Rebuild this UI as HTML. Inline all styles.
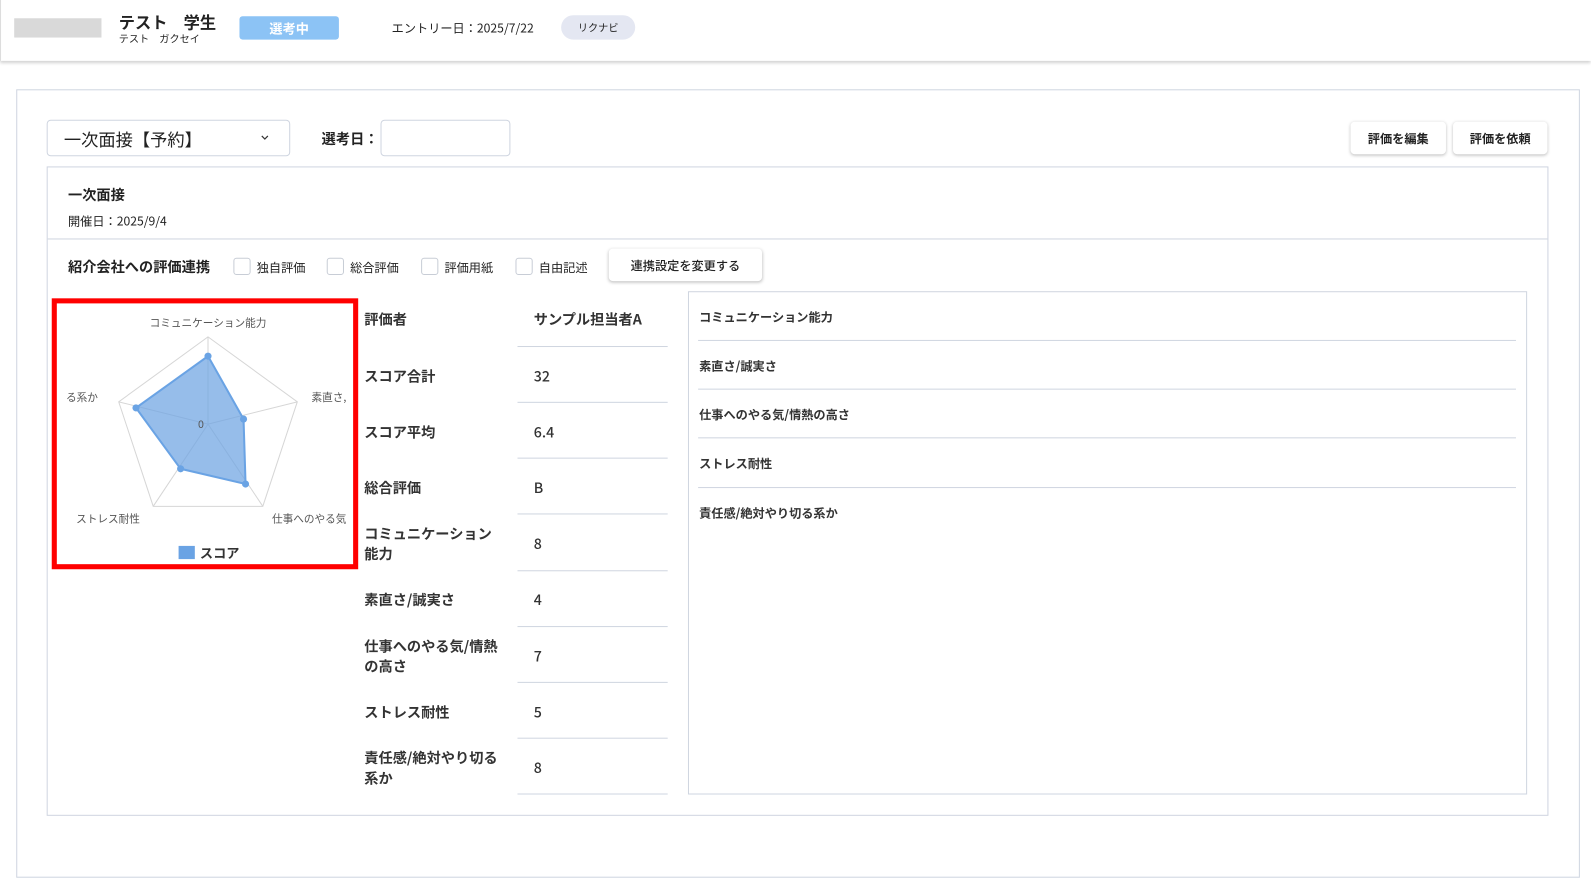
<!DOCTYPE html>
<html><head><meta charset="utf-8"><style>
*{box-sizing:border-box;margin:0;padding:0}
html,body{width:1591px;height:890px;overflow:hidden;background:#fff}
body{font-family:"Noto Sans CJK JP","Liberation Sans",sans-serif;color:#222}
#w{position:absolute;left:0;top:0;width:1568px;height:877px;transform:scale(1.0147);transform-origin:0 0}
.a{position:absolute;white-space:nowrap}
.hdr{position:absolute;left:0;top:0;width:1568px;height:60px;background:#fff;box-shadow:0 2px 3px rgba(0,0,0,.18);border-left:1px solid #ddd}
.btn{position:absolute;background:#fff;border-radius:4px;box-shadow:0 1px 3px rgba(0,0,0,.25);font-size:12px;font-weight:bold;display:flex;align-items:center;justify-content:center}
.cb{position:absolute;width:17px;height:17px;border:1px solid #c8cdd6;border-radius:3px;background:#fff}
.lbl{font-size:14px;font-weight:bold;color:#333;line-height:20px}
.val{font-size:14px;font-weight:bold;color:#333}
.ln{position:absolute;height:1px;background:#cfd5e0}
.it{font-size:12px;font-weight:bold;color:#333}
</style></head><body><div id="w">
<div class="hdr"></div>
<div class="a" style="left:14px;top:18px;width:86px;height:19px;background:#d9d9d9"></div>
<div class="a" style="left:117px;top:10px;font-size:16px;font-weight:bold;line-height:22px">テスト　学生</div>
<div class="a" style="left:117px;top:31px;font-size:10px;line-height:14px">テスト　ガクセイ</div>
<div class="a" style="left:236px;top:16px;width:98px;height:23px;background:#8cc3f5;border-radius:3px;color:#fff;font-size:13px;font-weight:bold;text-align:center;line-height:23px">選考中</div>
<div class="a" style="left:386px;top:19px;font-size:12px;line-height:18px">エントリー日：2025/7/22</div>
<div class="a" style="left:553px;top:15px;width:73px;height:24px;background:#e4e7f2;border-radius:12px;font-size:10px;text-align:center;line-height:24px">リクナビ</div>

<div class="a" style="left:16px;top:88px;width:1541px;height:777px;border:1px solid #cfd5e0"></div>
<div class="a" style="left:46px;top:118px;width:240px;height:36px;border:1px solid #cfd5e0;border-radius:4px;font-size:17px;line-height:36px;padding-left:16px">一次面接【予約】</div>
<svg class="a" style="left:256px;top:132px" width="10" height="8"><path d="M2 2 L5 5 L8 2" fill="none" stroke="#333" stroke-width="1.2"/></svg>
<div class="a" style="left:317px;top:127px;font-size:14px;font-weight:bold;line-height:20px">選考日：</div>
<div class="a" style="left:375px;top:118px;width:128px;height:36px;border:1px solid #cfd5e0;border-radius:4px"></div>
<div class="btn" style="left:1331px;top:120px;width:94px;height:32px">評価を編集</div>
<div class="btn" style="left:1432px;top:120px;width:93px;height:32px">評価を依頼</div>

<div class="a" style="left:46px;top:164px;width:1480px;height:640px;border:1px solid #cfd5e0"></div>
<div class="a" style="left:67px;top:182px;font-size:14px;font-weight:bold;line-height:20px">一次面接</div>
<div class="a" style="left:67px;top:209px;font-size:12px;line-height:17px">開催日：2025/9/4</div>
<div class="ln" style="left:47px;top:235px;width:1478px"></div>
<div class="a" style="left:67px;top:253px;font-size:14px;font-weight:bold;line-height:20px">紹介会社への評価連携</div>
<div class="cb" style="left:230px;top:254px"></div><div class="a" style="left:253px;top:255px;font-size:12px;line-height:17px">独自評価</div>
<div class="cb" style="left:322px;top:254px"></div><div class="a" style="left:345px;top:255px;font-size:12px;line-height:17px">総合評価</div>
<div class="cb" style="left:415px;top:254px"></div><div class="a" style="left:438px;top:255px;font-size:12px;line-height:17px">評価用紙</div>
<div class="cb" style="left:508px;top:254px"></div><div class="a" style="left:531px;top:255px;font-size:12px;line-height:17px">自由記述</div>
<div class="btn" style="left:600px;top:245px;width:151px;height:32px;font-weight:500">連携設定を変更する</div>

<div class="a" style="left:51px;top:294px;width:302px;height:267px;border:5px solid #f00"></div>
<svg class="a" style="left:0;top:0" width="400" height="600" font-family="Noto Sans CJK JP,Liberation Sans,sans-serif">
<g fill="none" stroke="#d6d6d6" stroke-width="1">
<polygon points="205,332 293,396 259,499 151,499 117,396"/>
<line x1="205" y1="418" x2="205" y2="332"/><line x1="205" y1="418" x2="293" y2="396"/><line x1="205" y1="418" x2="259" y2="499"/><line x1="205" y1="418" x2="151" y2="499"/><line x1="205" y1="418" x2="117" y2="396"/>
</g>
<polygon points="205,351 240,413 242,477 178,462 134,402" fill="rgba(110,164,226,.72)" stroke="#6aa3e4" stroke-width="2"/>
<g fill="#6aa3e4"><circle cx="205" cy="351" r="3.5"/><circle cx="240" cy="413" r="3.5"/><circle cx="242" cy="477" r="3.5"/><circle cx="178" cy="462" r="3.5"/><circle cx="134" cy="402" r="3.5"/></g>
<g font-size="10.5" fill="#555">
<text x="205" y="322" text-anchor="middle">コミュニケーション能力</text>
<text x="307" y="395">素直さ,</text>
<text x="65" y="395">る系か</text>
<text x="75" y="515">ストレス耐性</text>
<text x="268" y="515">仕事へのやる気</text>
<text x="198" y="422" text-anchor="middle">0</text>
</g>
<rect x="176" y="538" width="16" height="13" fill="#6aa3e4"/>
<text x="197" y="550" font-size="13" font-weight="bold" fill="#333">スコア</text>
</svg>

<div class="a lbl" style="left:359px;top:305px">評価者</div><div class="a val" style="left:526px;top:305px;line-height:20px">サンプル担当者A</div>
<div class="ln" style="left:510px;top:341px;width:148px"></div>
<div class="a lbl" style="left:359px;top:361px">スコア合計</div><div class="a val" style="left:526px;top:361px;line-height:20px;font-weight:500">32</div>
<div class="ln" style="left:510px;top:396px;width:148px"></div>
<div class="a lbl" style="left:359px;top:416px">スコア平均</div><div class="a val" style="left:526px;top:416px;line-height:20px;font-weight:500">6.4</div>
<div class="ln" style="left:510px;top:451px;width:148px"></div>
<div class="a lbl" style="left:359px;top:471px">総合評価</div><div class="a val" style="left:526px;top:471px;line-height:20px;font-weight:500">B</div>
<div class="ln" style="left:510px;top:506px;width:148px"></div>
<div class="a lbl" style="left:359px;top:516px">コミュニケーション<br>能力</div><div class="a val" style="left:526px;top:526px;line-height:20px;font-weight:500">8</div>
<div class="ln" style="left:510px;top:562px;width:148px"></div>
<div class="a lbl" style="left:359px;top:581px">素直さ/誠実さ</div><div class="a val" style="left:526px;top:581px;line-height:20px;font-weight:500">4</div>
<div class="ln" style="left:510px;top:617px;width:148px"></div>
<div class="a lbl" style="left:359px;top:627px">仕事へのやる気/情熱<br>の高さ</div><div class="a val" style="left:526px;top:637px;line-height:20px;font-weight:500">7</div>
<div class="ln" style="left:510px;top:672px;width:148px"></div>
<div class="a lbl" style="left:359px;top:692px">ストレス耐性</div><div class="a val" style="left:526px;top:692px;line-height:20px;font-weight:500">5</div>
<div class="ln" style="left:510px;top:727px;width:148px"></div>
<div class="a lbl" style="left:359px;top:737px">責任感/絶対やり切る<br>系か</div><div class="a val" style="left:526px;top:747px;line-height:20px;font-weight:500">8</div>
<div class="ln" style="left:510px;top:782px;width:148px"></div>

<div class="a" style="left:678px;top:287px;width:827px;height:496px;border:1px solid #cfd5e0"></div>
<div class="a it" style="left:689px;top:304px;line-height:17px">コミュニケーション能力</div>
<div class="ln" style="left:688px;top:335px;width:806px"></div>
<div class="a it" style="left:689px;top:352px;line-height:17px">素直さ/誠実さ</div>
<div class="ln" style="left:688px;top:383px;width:806px"></div>
<div class="a it" style="left:689px;top:400px;line-height:17px">仕事へのやる気/情熱の高さ</div>
<div class="ln" style="left:688px;top:431px;width:806px"></div>
<div class="a it" style="left:689px;top:448px;line-height:17px">ストレス耐性</div>
<div class="ln" style="left:688px;top:480px;width:806px"></div>
<div class="a it" style="left:689px;top:497px;line-height:17px">責任感/絶対やり切る系か</div>
</div></body></html>
